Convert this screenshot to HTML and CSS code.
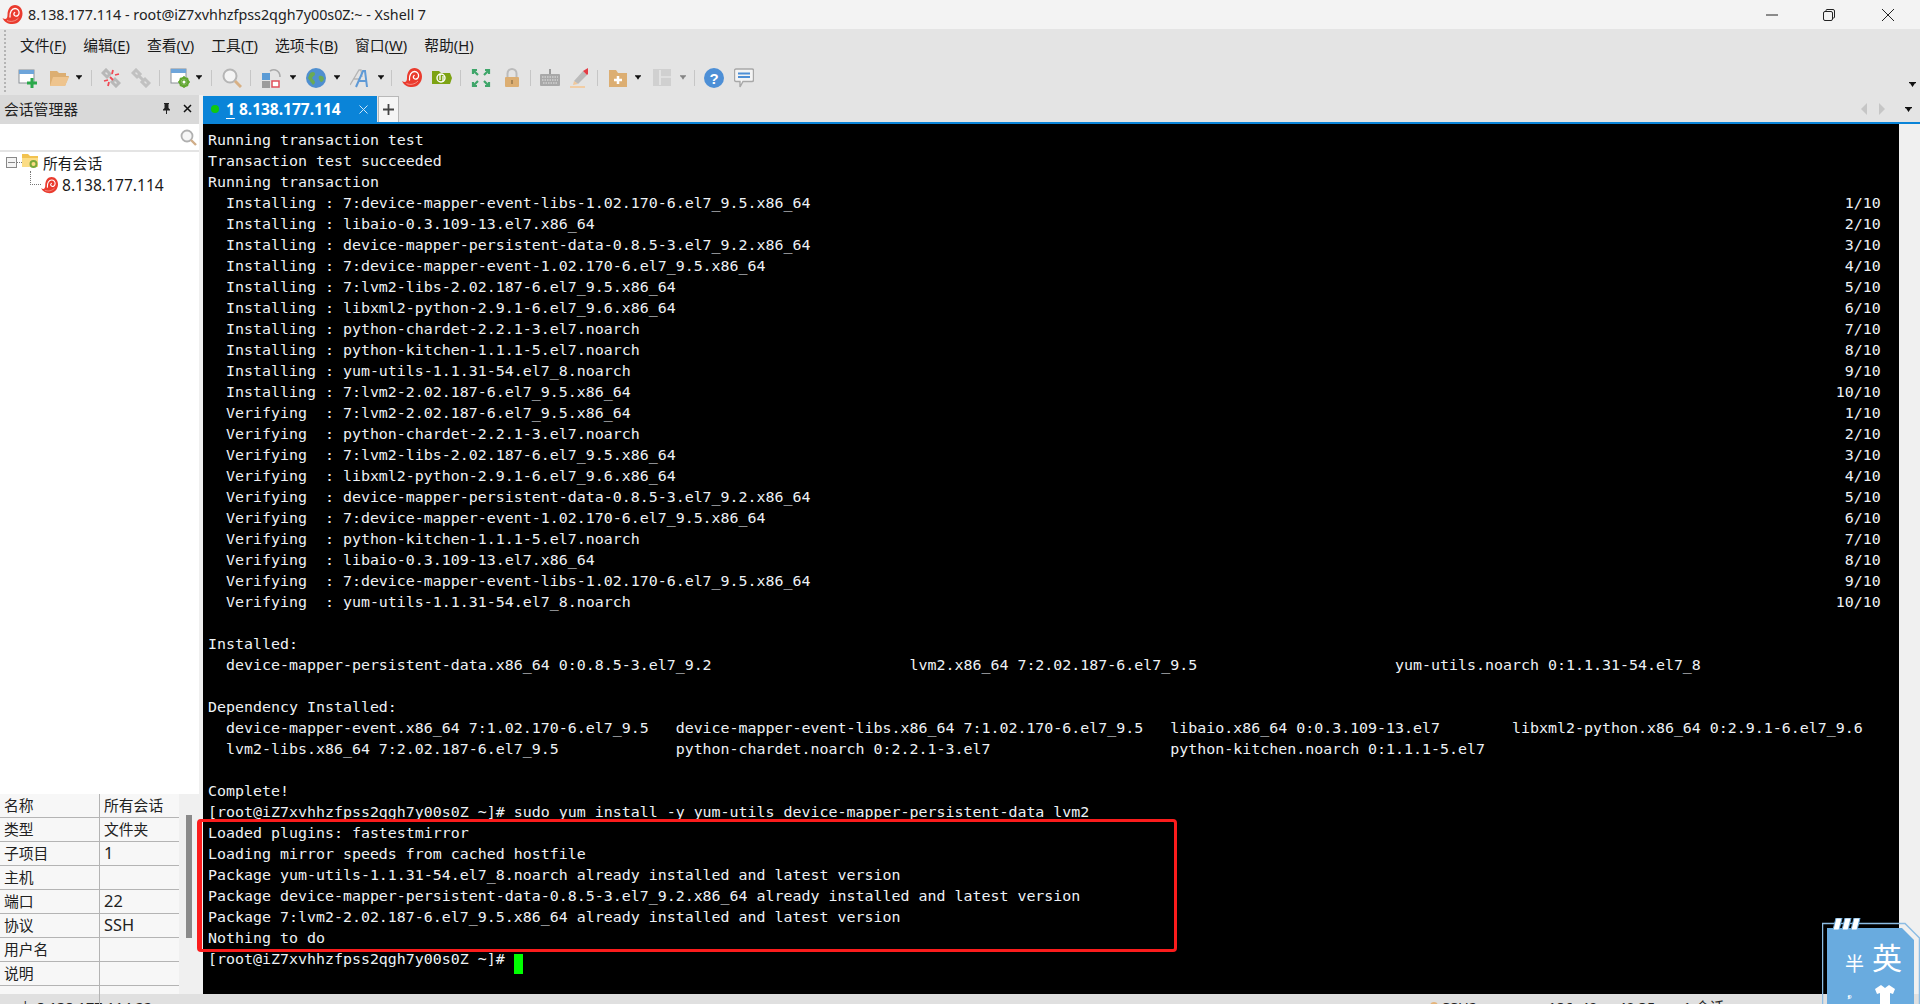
FILE: index.html
```html
<!DOCTYPE html>
<html lang="zh">
<head>
<meta charset="utf-8">
<title>Xshell 7</title>
<link rel="stylesheet" href="styles.css">
</head>
<body>
<svg class="defs" width="0" height="0">
  <symbol id="snail" viewBox="0 0 20 20">
    <path d="M0 13C3 15 5 14 5 10C5 4 8 0 12.500 0C17 0 20 4 20 8.500C20 14 16 19 10 19C5 19 2 17 0 13Z" fill="#ea3b2e"/>
    <path d="M7.500 12C7 7 9.500 3.500 12.500 3.500C15 3.500 16.800 5.500 16.600 8C16.400 10.400 14.400 11.600 12.800 11C11.200 10.400 10.800 8.400 12.200 7.500" fill="none" stroke="#fff" stroke-width="1.300" stroke-linecap="round"/>
    <path d="M4.500 15.500C8 17.200 13 16.500 16 13" fill="none" stroke="#f7a79f" stroke-width=".8"/>
  </symbol>
  <symbol id="caret" viewBox="0 0 7 5">
    <path d="M0 0H7V1.200H6L3.500 5L1 1.200H0Z" fill="#111"/>
  </symbol>
</svg>
<div class="app">
  <header class="titlebar">
    <svg class="title-logo"><use href="#snail"/></svg>
    <span class="title-text">8.138.177.114 - root@iZ7xvhhzfpss2qgh7y00s0Z:~ - Xshell 7</span>
    <div class="winctl">
      <svg class="win-icon" viewBox="0 0 12 12"><path d="M0 6H12" stroke="#222" fill="none"/></svg>
      <svg class="win-icon" viewBox="0 0 12 12"><rect x=".5" y="2.500" width="9" height="9" rx="1.500" fill="none" stroke="#222"/><path d="M3 2V1.500A1 1 0 0 1 4 .5H10A1.500 1.500 0 0 1 11.500 2V8A1 1 0 0 1 10.500 9H10" fill="none" stroke="#222"/></svg>
      <svg class="win-icon" viewBox="0 0 12 12"><path d="M0 0L12 12M12 0L0 12" stroke="#222" fill="none"/></svg>
    </div>
  </header>

  <div class="chrome">
    <nav class="menubar">
      <span class="menu">文件(<u>F</u>)</span>
      <span class="menu">编辑(<u>E</u>)</span>
      <span class="menu">查看(<u>V</u>)</span>
      <span class="menu">工具(<u>T</u>)</span>
      <span class="menu">选项卡(<u>B</u>)</span>
      <span class="menu">窗口(<u>W</u>)</span>
      <span class="menu">帮助(<u>H</u>)</span>
    </nav>
    <div class="toolbar">
      <svg class="ti" viewBox="0 0 20 20"><rect x="1" y="2" width="15" height="13" fill="#fff" stroke="#8a8f96"/><rect x="1" y="2" width="15" height="4" fill="#6ea5da"/><path d="M14 10V20M9 15H19" stroke="#2aa84a" stroke-width="3"/></svg>
      <svg class="ti m11" viewBox="0 0 20 20"><path d="M1 3H8L10 5H17V8H20L16 18H1Z" fill="#dcae72"/><path d="M4 9H20L16 18H1Z" fill="#eec48e"/></svg>
      <svg class="ca m7"><use href="#caret"/></svg>
      <i class="sep m9"></i>
      <svg class="ti m9" viewBox="0 0 20 20"><g fill="none" stroke="#b8b8b8" stroke-width="3"><path d="M2 5L5 2L9 6L6 9Z"/><path d="M18 15L15 18L11 14L14 11Z"/></g><path d="M9 9L12 12M12 2L11 6M18 6L14 7M3 13L7 12M7 18L8 14" stroke="#ef4a55" stroke-width="1.800"/></svg>
      <svg class="ti m10 dim" viewBox="0 0 20 20"><g fill="none" stroke="#bbb" stroke-width="3"><path d="M2 5L5 2L9 6L6 9Z"/><path d="M18 15L15 18L11 14L14 11Z"/><path d="M7 7L13 13"/></g></svg>
      <i class="sep m8"></i>
      <svg class="ti m10" viewBox="0 0 20 20"><rect x="1" y="1" width="15" height="14" fill="#fff" stroke="#8a8f96"/><rect x="1" y="1" width="15" height="4" fill="#6ea5da"/><circle cx="14" cy="14" r="4" fill="none" stroke="#63a832" stroke-width="2.400"/><path d="M14 8V20M8 14H20M10 10L18 18M18 10L10 18" stroke="#63a832" stroke-width="1.400"/><circle cx="14" cy="14" r="1.500" fill="#fff"/></svg>
      <svg class="ca m6"><use href="#caret"/></svg>
      <i class="sep m9"></i>
      <svg class="ti m10" viewBox="0 0 20 20"><circle cx="8" cy="8" r="6.500" fill="#f4f4f4" stroke="#b5b5b5" stroke-width="2"/><path d="M13 13L19 19" stroke="#d8b084" stroke-width="3"/></svg>
      <i class="sep m8"></i>
      <svg class="ti m11" viewBox="0 0 20 20"><rect x="0" y="5" width="8" height="7" fill="#5b9bd5"/><rect x="0" y="13" width="8" height="7" fill="#9c9c9c"/><rect x="10" y="13" width="7" height="6" fill="#fff" stroke="#e0505c" stroke-width="1.500"/><path d="M8 3C13 0 18 3 18 9" fill="none" stroke="#aaa" stroke-width="1.600"/></svg>
      <svg class="ca m8"><use href="#caret"/></svg>
      <svg class="ti m10" viewBox="0 0 20 20"><circle cx="10" cy="10" r="10" fill="#4f8fd0"/><path d="M4 5C7 3 9 4 9 6C9 8 7 8 6 10C7 12 9 12 9 15L7 17C5 14 3 12 2 10ZM13 8C15 7 18 8 18 11C17 14 15 15 14 13C13 11 12 10 13 8Z" fill="#6aaa55"/></svg>
      <svg class="ca m8"><use href="#caret"/></svg>
      <svg class="ti m10" viewBox="0 0 20 20"><path d="M0 17L9 2H11L12 9M3 11H9" stroke="#b5b5b5" stroke-width="1.300" fill="none"/><path d="M6 19L13 3H15L17 19M8.500 13H16" stroke="#5f9ad6" stroke-width="2" fill="none"/></svg>
      <svg class="ca m8"><use href="#caret"/></svg>
      <i class="sep m7"></i>
      <svg class="ti m10"><use href="#snail"/></svg>
      <svg class="ti m10" viewBox="0 0 20 20"><path d="M0 3H7L9 5H18L20 10L18 16H0Z" fill="#7da313"/><circle cx="9" cy="10" r="4" fill="none" stroke="#fff" stroke-width="1.400"/><path d="M8 6V12M11 8V14" stroke="#fff" stroke-width="1.300"/></svg>
      <i class="sep m8"></i>
      <svg class="ti m10" viewBox="0 0 20 20"><g fill="none" stroke="#3fa66a" stroke-width="2.200"><path d="M2 6V2H6M18 6V2H14M2 14V18H6M18 14V18H14"/><path d="M2 2L7 7M18 2L13 7M2 18L7 13M18 18L13 13"/></g></svg>
      <svg class="ti m11" viewBox="0 0 20 20"><path d="M5.500 9V5.500A4.500 4.500 0 0 1 14.500 5.500V9" fill="none" stroke="#bbb" stroke-width="2"/><rect x="3" y="9" width="14" height="10" rx="1" fill="#dcae72"/><rect x="9" y="12" width="2" height="4" fill="#a98656"/></svg>
      <i class="sep m8"></i>
      <svg class="ti m9" viewBox="0 0 20 20"><path d="M10 1V6" stroke="#888" stroke-width="1.600"/><rect x="0" y="6" width="20" height="12" rx="1" fill="#a8a8a8"/><path d="M2 9H18M2 12H18M3 15H17" stroke="#e4e4e4" stroke-dasharray="1.500 1"/></svg>
      <svg class="ti m9" viewBox="0 0 20 20"><path d="M5 13L14 3L18 7L9 16Z" fill="#bbb"/><path d="M14 3L19 0V6L18 7Z" fill="#e33c45"/><path d="M5 13L9 16L4 17Z" fill="#f0c79a"/><path d="M1 19H16" stroke="#f1cda5" stroke-width="2"/></svg>
      <i class="sep m8"></i>
      <svg class="ti m10" viewBox="0 0 20 20"><path d="M1 2H8L10 5H19V19H1Z" fill="#dcae72"/><path d="M10 8V16M6 12H14" stroke="#fff" stroke-width="2.500"/></svg>
      <svg class="ca m7"><use href="#caret"/></svg>
      <svg class="ti m11" viewBox="0 0 20 20"><rect x="1" y="1" width="18" height="17" fill="#d0d0d0"/><path d="M8 2V17M9 9H19" stroke="#eee" stroke-width="1.200"/></svg>
      <svg class="ca m8 faint"><use href="#caret"/></svg>
      <i class="sep m8"></i>
      <svg class="ti m9" viewBox="0 0 20 20"><circle cx="10" cy="10" r="10" fill="#4d8fd6"/><text class="help-q" x="10" y="15.500" text-anchor="middle">?</text></svg>
      <svg class="ti m10" viewBox="0 0 20 20"><path d="M2 1H18A1.500 1.500 0 0 1 19.500 2.500V12A1.500 1.500 0 0 1 18 13.500H9L6 19V13.500H2A1.500 1.500 0 0 1 .5 12V2.500A1.500 1.500 0 0 1 2 1Z" fill="#f4f4f4" stroke="#a8a8a8" stroke-width="1.400"/><path d="M4 5.500H16M4 9H16" stroke="#4d8fd6" stroke-width="1.800"/></svg>
      <svg class="more-caret"><use href="#caret"/></svg>
    </div>
  </div>

  <main class="workspace">
    <aside class="sidebar">
      <div class="side-head">
        <span class="side-title">会话管理器</span>
        <svg class="pin" viewBox="0 0 9 11"><path d="M2 0H7V1H6.500V5L8 6.500V7.500H5V11H4V7.500H1V6.500L2.500 5V1H2Z" fill="#222"/></svg>
        <svg class="side-x" viewBox="0 0 9 9"><path d="M1 1L8 8M8 1L1 8" stroke="#111" stroke-width="1.500"/></svg>
      </div>
      <div class="side-search">
        <svg class="search-icon" viewBox="0 0 17 17"><circle cx="7" cy="7" r="5.500" fill="#f6f6f6" stroke="#b0b0b0" stroke-width="1.800"/><path d="M11 11L16 16" stroke="#d0ad88" stroke-width="2.400"/></svg>
      </div>
      <div class="tree">
        <div class="tree-row tree-root">
          <span class="expander"></span>
          <span class="tree-dash"></span>
          <svg class="tree-folder" viewBox="0 0 16 16"><path d="M0 1H6L8 3H16V14H0Z" fill="#f2c24f"/><path d="M0 5H16V14H0Z" fill="#fbdc85"/><circle cx="11.500" cy="11" r="3" fill="none" stroke="#79a83a" stroke-width="2"/></svg>
          <span class="tree-label">所有会话</span>
        </div>
        <div class="tree-row tree-leaf">
          <span class="tree-elbow"></span>
          <svg class="tree-snail"><use href="#snail"/></svg>
          <span class="tree-label host">8.138.177.114</span>
        </div>
      </div>
      <div class="props-wrap">
        <div class="props">
          <div class="prop"><span>名称</span><span>所有会话</span></div>
          <div class="prop"><span>类型</span><span>文件夹</span></div>
          <div class="prop"><span>子项目</span><span class="latin">1</span></div>
          <div class="prop"><span>主机</span><span></span></div>
          <div class="prop"><span>端口</span><span class="latin">22</span></div>
          <div class="prop"><span>协议</span><span class="latin">SSH</span></div>
          <div class="prop"><span>用户名</span><span></span></div>
          <div class="prop"><span>说明</span><span></span></div>
          <div class="prop"><span></span><span></span></div>
        </div>
        <div class="props-scroll"><div class="props-thumb"></div></div>
      </div>
    </aside>

    <section class="session">
      <div class="tabbar">
        <div class="tab">
          <span class="tab-dot"></span>
          <span class="tab-name"><u>1</u> 8.138.177.114</span>
          <svg class="tab-x" viewBox="0 0 9 9"><path d="M.5 .5L8.500 8.500M8.500 .5L.5 8.500" stroke="#cfe6f7"/></svg>
        </div>
        <div class="tab-add">
          <svg viewBox="0 0 11 11" class="tab-plus"><path d="M5.500 0V11M0 5.500H11" stroke="#444" stroke-width="1.800"/></svg>
        </div>
        <div class="tab-nav">
          <svg class="nav-arrow" viewBox="0 0 6 12"><path d="M6 0V12L0 6Z" fill="#c6c6c6"/></svg>
          <svg class="nav-arrow" viewBox="0 0 6 12"><path d="M0 0V12L6 6Z" fill="#c6c6c6"/></svg>
          <svg class="nav-caret"><use href="#caret"/></svg>
        </div>
      </div>
      <div class="term-row">
        <div class="terminal"><pre class="screen"><div>Running transaction test</div><div>Transaction test succeeded</div><div>Running transaction</div><div class="pkg"><span>  Installing : 7:device-mapper-event-libs-1.02.170-6.el7_9.5.x86_64</span><span>1/10</span></div><div class="pkg"><span>  Installing : libaio-0.3.109-13.el7.x86_64</span><span>2/10</span></div><div class="pkg"><span>  Installing : device-mapper-persistent-data-0.8.5-3.el7_9.2.x86_64</span><span>3/10</span></div><div class="pkg"><span>  Installing : 7:device-mapper-event-1.02.170-6.el7_9.5.x86_64</span><span>4/10</span></div><div class="pkg"><span>  Installing : 7:lvm2-libs-2.02.187-6.el7_9.5.x86_64</span><span>5/10</span></div><div class="pkg"><span>  Installing : libxml2-python-2.9.1-6.el7_9.6.x86_64</span><span>6/10</span></div><div class="pkg"><span>  Installing : python-chardet-2.2.1-3.el7.noarch</span><span>7/10</span></div><div class="pkg"><span>  Installing : python-kitchen-1.1.1-5.el7.noarch</span><span>8/10</span></div><div class="pkg"><span>  Installing : yum-utils-1.1.31-54.el7_8.noarch</span><span>9/10</span></div><div class="pkg"><span>  Installing : 7:lvm2-2.02.187-6.el7_9.5.x86_64</span><span>10/10</span></div><div class="pkg"><span>  Verifying  : 7:lvm2-2.02.187-6.el7_9.5.x86_64</span><span>1/10</span></div><div class="pkg"><span>  Verifying  : python-chardet-2.2.1-3.el7.noarch</span><span>2/10</span></div><div class="pkg"><span>  Verifying  : 7:lvm2-libs-2.02.187-6.el7_9.5.x86_64</span><span>3/10</span></div><div class="pkg"><span>  Verifying  : libxml2-python-2.9.1-6.el7_9.6.x86_64</span><span>4/10</span></div><div class="pkg"><span>  Verifying  : device-mapper-persistent-data-0.8.5-3.el7_9.2.x86_64</span><span>5/10</span></div><div class="pkg"><span>  Verifying  : 7:device-mapper-event-1.02.170-6.el7_9.5.x86_64</span><span>6/10</span></div><div class="pkg"><span>  Verifying  : python-kitchen-1.1.1-5.el7.noarch</span><span>7/10</span></div><div class="pkg"><span>  Verifying  : libaio-0.3.109-13.el7.x86_64</span><span>8/10</span></div><div class="pkg"><span>  Verifying  : 7:device-mapper-event-libs-1.02.170-6.el7_9.5.x86_64</span><span>9/10</span></div><div class="pkg"><span>  Verifying  : yum-utils-1.1.31-54.el7_8.noarch</span><span>10/10</span></div><div> </div><div>Installed:</div><div>  device-mapper-persistent-data.x86_64 0:0.8.5-3.el7_9.2                      lvm2.x86_64 7:2.02.187-6.el7_9.5                      yum-utils.noarch 0:1.1.31-54.el7_8</div><div> </div><div>Dependency Installed:</div><div>  device-mapper-event.x86_64 7:1.02.170-6.el7_9.5   device-mapper-event-libs.x86_64 7:1.02.170-6.el7_9.5   libaio.x86_64 0:0.3.109-13.el7        libxml2-python.x86_64 0:2.9.1-6.el7_9.6</div><div>  lvm2-libs.x86_64 7:2.02.187-6.el7_9.5             python-chardet.noarch 0:2.2.1-3.el7                    python-kitchen.noarch 0:1.1.1-5.el7</div><div> </div><div>Complete!</div><div>[root@iZ7xvhhzfpss2qgh7y00s0Z ~]# sudo yum install -y yum-utils device-mapper-persistent-data lvm2</div><div>Loaded plugins: fastestmirror</div><div>Loading mirror speeds from cached hostfile</div><div>Package yum-utils-1.1.31-54.el7_8.noarch already installed and latest version</div><div>Package device-mapper-persistent-data-0.8.5-3.el7_9.2.x86_64 already installed and latest version</div><div>Package 7:lvm2-2.02.187-6.el7_9.5.x86_64 already installed and latest version</div><div>Nothing to do</div><div>[root@iZ7xvhhzfpss2qgh7y00s0Z ~]# <span class="cursor"> </span></div></pre></div>
        <div class="term-gutter"></div>
      </div>
    </section>
    <div class="annotation"></div>
  </main>

  <footer class="statusbar">
    <span class="status-left">↓ 8.138.177.114:22</span>
    <span class="status-dot"></span>
    <span class="status-ssh">SSH2</span>
    <span class="status-size">186x40</span>
    <span class="status-pos">40,35</span>
    <span class="status-sess">1 会话</span>
  </footer>

  <aside class="ime">
    <svg class="ime-shape" viewBox="0 0 98 86"><path d="M.5 86V5.500H83L97.500 20V86" fill="none" stroke="#8dbde4" stroke-width="1.500"/><path d="M5 86V10H80L92 22V86Z" fill="#69abdf"/><path d="M11 12L14 0H20L17 12ZM20 12L23 0H29L26 12ZM29 12L32 0H38L35 12Z" fill="#fff" stroke="#69abdf"/></svg>
    <span class="ime-half">半</span>
    <span class="ime-lang">英</span>
    <span class="ime-punct">，。</span>
    <svg class="ime-shirt" viewBox="0 0 20 20"><path d="M6 0L10 3L14 0L20 4L18 9L15 8V20H5V8L2 9L0 4Z" fill="#fff"/></svg>
  </aside>
</div>
</body>
</html>
```
FILE: styles.css
```css
* { box-sizing: border-box; }
html, body { margin: 0; padding: 0; height: 100%; overflow: hidden; }
body { font-family: "Noto Sans", "Noto Sans CJK SC", sans-serif; color: #1a1a1a; background: #f0f0f0; }
.defs { position: absolute; }

.app { position: relative; width: 1920px; height: 1004px; display: flex; flex-direction: column; overflow: hidden; }

.titlebar { height: 29px; flex: none; display: flex; align-items: center; background: #f3f3f3; padding-left: 2px; }
.title-logo { width: 21px; height: 20px; flex: none; }
.title-text { margin-left: 5px; font-size: 14.3px; color: #222; white-space: nowrap; }
.winctl { margin-left: auto; display: flex; gap: 46px; padding-right: 26px; }
.win-icon { width: 12px; height: 12px; display: block; }
.win-icon:nth-child(2) { margin: 0 1px 0 -1px; }

.chrome { height: 66px; flex: none; background: #e4e4e4; position: relative; padding-left: 4px; }
.chrome::before { content: ""; position: absolute; left: 4px; top: 1px; height: 62px; border-left: 2px dotted #b4b4b4; }
.menubar { height: 31px; display: flex; align-items: center; gap: 17px; padding-left: 16px; }
.menu { font-size: 14.8px; color: #1a1a1a; white-space: nowrap; }
.menu u { text-underline-offset: 2px; }
.toolbar { height: 35px; display: flex; align-items: center; padding-left: 14px; position: relative; }
.ti { width: 20px; height: 20px; flex: none; display: block; }
.ca { width: 6px; height: 5px; flex: none; display: block; }
.faint { opacity: .45; }
.dim { opacity: .85; }
.sep { width: 1px; height: 16px; background: #c6c6c6; flex: none; display: block; }
.m6 { margin-left: 6px; } .m7 { margin-left: 7px; } .m8 { margin-left: 8px; } .m9 { margin-left: 9px; }
.m10 { margin-left: 10px; } .m11 { margin-left: 11px; }
.help-q { font: 700 15px "Liberation Sans", sans-serif; fill: #fff; }
.more-caret { position: absolute; right: 4px; top: 22px; width: 7px; height: 5px; }

.workspace { flex: 1; display: flex; position: relative; min-height: 0; background: #f0f0f0; }

.sidebar { width: 199px; flex: none; display: flex; flex-direction: column; background: #fff; }
.side-head { height: 29px; flex: none; display: flex; align-items: center; background: #d9d9d9; padding: 0 7px 2px 4px; }
.side-title { font-size: 14.8px; color: #222; flex: 1; }
.pin { width: 9px; height: 11px; margin-right: 12px; }
.side-x { width: 9px; height: 9px; }
.side-search { height: 25px; flex: none; margin-top: 1px; margin-left: 2px; background: #fff; display: flex; align-items: center; justify-content: flex-end; padding-right: 2px; }
.search-icon { width: 17px; height: 17px; }
.tree { flex: 1; border-top: 2px solid #e4e4e4; background: #fff; min-height: 0; }
.tree-row { height: 22px; display: flex; align-items: center; font-size: 15px; white-space: nowrap; }
.tree-root { margin-top: -1px; margin-bottom: 1px; }
.expander { width: 11px; height: 11px; margin-left: 6px; border: 1px solid #888; background: linear-gradient(#888, #888) center / 7px 1px no-repeat #f4f4f4; flex: none; }
.tree-dash { width: 5px; border-top: 1px dotted #777; flex: none; }
.tree-folder { width: 16px; height: 16px; flex: none; margin-top: -2px; }
.tree-label { color: #1a1a1a; margin-left: 5px; font-size: 14.8px; }
.tree-elbow { width: 11px; height: 14px; margin-left: 30px; margin-top: -14px; border-left: 1px dotted #777; border-bottom: 1px dotted #777; flex: none; }
.tree-snail { width: 17px; height: 17px; flex: none; }
.tree-label.host { margin-left: 4px; font-size: 15.6px; }

.props-wrap { height: 200px; flex: none; display: flex; background: #f0f0f0; }
.props { width: 179px; flex: none; background: #f7f7f7; }
.prop { height: 24px; display: grid; grid-template-columns: 100px 1fr; font-size: 14.8px; line-height: 22px; color: #222; border-bottom: 1px solid #b4b4b4; }
.prop span { padding-left: 4px; height: 23px; overflow: hidden; }
.prop span:first-child { border-right: 1px solid #b4b4b4; }
.prop .latin { font-size: 16.4px; }
.props-scroll { flex: 1; position: relative; }
.props-thumb { margin: 21px 0 0 7px; width: 6px; height: 123px; background: #8a8a8a; }

.session { flex: 1; min-width: 0; margin-left: 4px; display: flex; flex-direction: column; }
.tabbar { height: 29px; flex: none; display: flex; background: #e4e4e4; border-bottom: 2px solid #0a84d8; align-items: stretch; padding-top: 1px; }
.tab { width: 174px; flex: none; background: #0a84d8; display: flex; align-items: center; padding-left: 8px; color: #fff; }
.tab-dot { width: 8px; height: 8px; border-radius: 50%; background: #10c810; flex: none; }
.tab-name { margin-left: 7px; font-size: 15.5px; font-weight: 700; white-space: nowrap; }
.tab-name u { text-underline-offset: 3px; }
.tab-x { width: 9px; height: 9px; margin-left: 18px; flex: none; }
.tab-add { width: 21px; margin-left: 1px; flex: none; background: #f5f5f5; border: 1px solid #b8b8b8; border-bottom: 0; display: flex; align-items: center; justify-content: center; }
.tab-plus { width: 11px; height: 11px; }
.tab-nav { margin-left: auto; display: flex; align-items: center; padding-right: 8px; }
.nav-arrow { width: 6px; height: 12px; margin-right: 12px; }
.nav-caret { width: 7px; height: 5px; margin-left: 8px; }

.term-row { flex: 1; display: flex; min-height: 0; }
.terminal { width: 1696px; flex: none; background: #000; padding: 6px 0 0 5px; overflow: hidden; }
.term-gutter { flex: 1; background: #f0f0f0; }
.screen { margin: 0; width: 186ch; font-family: "DejaVu Sans Mono", monospace; font-size: 14.955px; line-height: 21px; color: #eef2f6; white-space: pre; }
.screen div { height: 21px; }
.pkg { display: flex; justify-content: space-between; }
.cursor { display: inline-block; width: 9px; height: 20px; background: #00ff00; vertical-align: -5px; }

.annotation { position: absolute; left: 197px; top: 724px; width: 980px; height: 133px; border: 3px solid #fb1c1c; border-left-width: 5px; border-radius: 4px; }

.statusbar { height: 10px; flex: none; background: #e0e0e0; display: flex; font-size: 14.6px; line-height: 20px; padding-top: 3px; overflow: hidden; color: #222; white-space: nowrap; }
.statusbar span { display: block; height: 20px; }
.status-left { margin-left: 18px; width: 1412px; flex: none; }
.statusbar .status-dot { width: 8px; height: 8px; margin-top: 5px; border-radius: 50%; background: #e5b47a; flex: none; }
.status-ssh { margin-left: 4px; width: 106px; flex: none; }
.status-size { width: 70px; flex: none; }
.status-pos { width: 65px; flex: none; }
.status-sess { flex: none; }

.ime { position: absolute; right: 0; bottom: 0; width: 98px; height: 86px; color: #fff; overflow: hidden; }
.ime-shape { position: absolute; left: 0; top: 0; width: 98px; height: 86px; }
.ime-half { position: absolute; left: 23px; top: 31px; font-size: 19px; line-height: 30px; }
.ime-lang { position: absolute; left: 50px; top: 20px; font-size: 30px; line-height: 40px; }
.ime-punct { position: absolute; left: 24px; top: 66px; font-size: 11px; line-height: 20px; letter-spacing: -4px; }
.ime-shirt { position: absolute; left: 53px; top: 67px; width: 20px; height: 20px; }
```
